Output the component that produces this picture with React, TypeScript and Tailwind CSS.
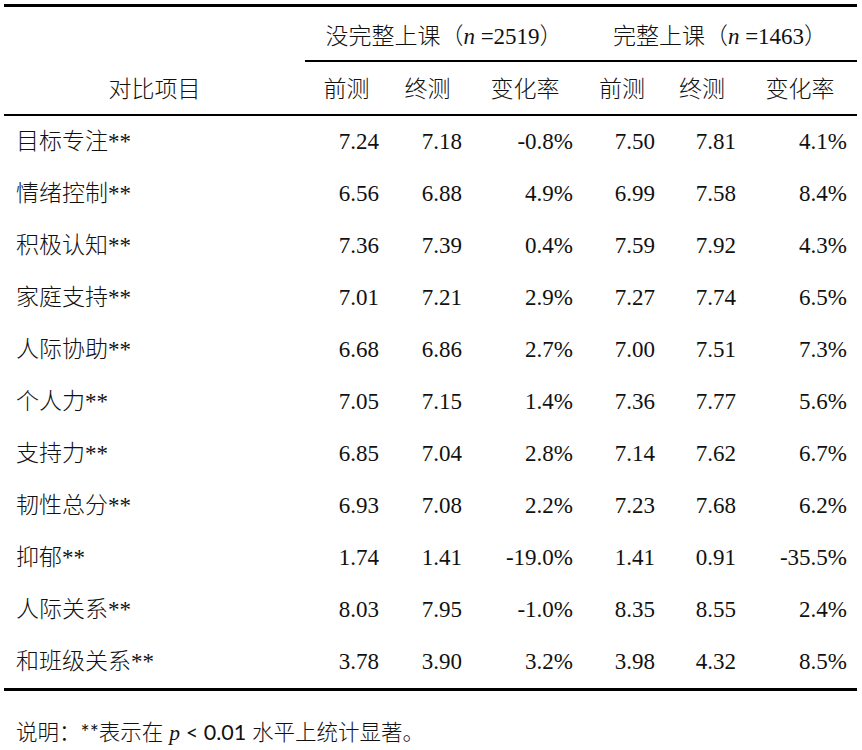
const rows: [string, string[]][] = [
  ["目标专注**", ["7.24", "7.18", "-0.8%", "7.50", "7.81", "4.1%"]],
  ["情绪控制**", ["6.56", "6.88", "4.9%", "6.99", "7.58", "8.4%"]],
  ["积极认知**", ["7.36", "7.39", "0.4%", "7.59", "7.92", "4.3%"]],
  ["家庭支持**", ["7.01", "7.21", "2.9%", "7.27", "7.74", "6.5%"]],
  ["人际协助**", ["6.68", "6.86", "2.7%", "7.00", "7.51", "7.3%"]],
  ["个人力**", ["7.05", "7.15", "1.4%", "7.36", "7.77", "5.6%"]],
  ["支持力**", ["6.85", "7.04", "2.8%", "7.14", "7.62", "6.7%"]],
  ["韧性总分**", ["6.93", "7.08", "2.2%", "7.23", "7.68", "6.2%"]],
  ["抑郁**", ["1.74", "1.41", "-19.0%", "1.41", "0.91", "-35.5%"]],
  ["人际关系**", ["8.03", "7.95", "-1.0%", "8.35", "8.55", "2.4%"]],
  ["和班级关系**", ["3.78", "3.90", "3.2%", "3.98", "4.32", "8.5%"]],
];

// right padding per numeric column, so the figures line up like the source doc
const numPad = ["pr-[9px]", "pr-[5px]", "pr-[10px]", "pr-[6px]", "pr-[7px]", "pr-[10px]"];
const heads = ["前测", "终测", "变化率", "前测", "终测", "变化率"];

const grid = "grid grid-cols-[301px_83px_79px_116px_78px_82px_114px]";

export default function App() {
  return (
    <div className="min-h-[750px] w-[862px] bg-white text-[#111] font-light font-['Liberation_Serif','Noto_Sans_CJK_SC',serif] text-[23px] leading-none">
      <div className="pt-1 pl-1 w-[857px]">
        <div className="border-t-[3px] border-b-[3px] border-black">
          <div className={grid}>
            <div className="h-[55px]" />
            <div className="col-span-3 h-[55px] border-b-2 border-black flex items-center justify-center pt-[5px]">
              没完整上课（<i>n</i>&nbsp;=2519）
            </div>
            <div className="col-span-3 h-[55px] border-b-2 border-black flex items-center justify-center pt-[5px]">
              完整上课（<i>n</i>&nbsp;=1463）
            </div>
          </div>
          <div className={`${grid} border-b-2 border-black`}>
            <div className="h-[52px] flex items-center justify-center pt-[3px]">对比项目</div>
            {heads.map((h, i) => (
              <div key={i} className="h-[52px] flex items-center justify-center pt-[3px]">
                {h}
              </div>
            ))}
          </div>
          {rows.map(([label, vals]) => (
            <div key={label} className={grid}>
              <div className="h-[52px] flex items-center pl-3 pb-[2px]">{label}</div>
              {vals.map((v, i) => (
                <div key={i} className={`h-[52px] flex items-center justify-end pb-[2px] ${numPad[i]}`}>
                  {v}
                </div>
              ))}
            </div>
          ))}
        </div>
      </div>
      <p className="mt-[27px] pl-4 text-[21.5px] leading-[28px] font-['Lato','Noto_Sans_CJK_SC',sans-serif]">
        说明：<span className="font-normal">**</span>表示在{" "}
        <i className="font-normal font-['Liberation_Serif',serif]">p</i>{" "}
        <span className="font-normal">&lt; 0.01</span> 水平上统计显著。
      </p>
    </div>
  );
}
